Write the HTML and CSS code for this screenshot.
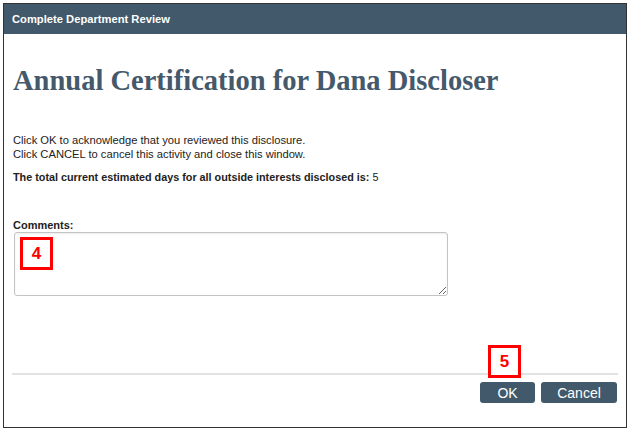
FILE: index.html
```html
<!DOCTYPE html>
<html lang="en">
<head>
    <meta charset="UTF-8">
    <meta name="viewport" content="width=device-width, initial-scale=1.0">
    <title>Complete Department Review</title>
    <link rel="stylesheet" href="styles.css">
</head>
<body>
    <div class="dialog">
        <div class="dialog-header">Complete Department Review</div>

        <div class="dialog-body">
            <h1>Annual Certification for Dana Discloser</h1>

            <p class="instructions">
                Click OK to acknowledge that you reviewed this disclosure.<br>
                Click CANCEL to cancel this activity and close this window.
            </p>

            <p class="total">The total current estimated days for all outside interests disclosed is: <span class="days">5</span></p>

            <div class="comments">
                <label for="comments">Comments:</label>
                <div class="field">
                    <textarea id="comments"></textarea>
                    <span class="step step-comments">4</span>
                </div>
            </div>
        </div>

        <div class="dialog-footer">
            <div class="buttons">
                <div class="btn-wrap">
                    <button class="btn btn-ok">OK</button>
                    <span class="step step-ok">5</span>
                </div>
                <button class="btn btn-cancel">Cancel</button>
            </div>
        </div>
    </div>
</body>
</html>
```

FILE: styles.css
```css
body {
    margin: 0;
    padding: 3px;
    font-family: Arial, "Liberation Sans", sans-serif;
    font-size: 11.2px;
    color: #222;
    background-color: white;
}
.dialog {
    width: 622px;
    height: 423px;
    border: 1px solid #333;
    display: flex;
    flex-direction: column;
}
.dialog-header {
    height: 30px;
    line-height: 30px;
    padding-left: 8px;
    background-color: #41596a;
    color: white;
    font-weight: bold;
    font-size: 11.2px;
}
.dialog-body {
    flex: 1;
    padding: 0 9px;
}
h1 {
    font-family: "Times New Roman", "Liberation Serif", serif;
    font-size: 28.5px;
    font-weight: bold;
    color: #44596b;
    margin: 29px 0 0;
    line-height: 36px;
}
.instructions {
    margin: 34px 0 0;
    line-height: 14px;
}
.total {
    margin: 9px 0 0;
    line-height: 14px;
    font-weight: bold;
    font-size: 10.8px;
}
.days {
    font-weight: normal;
}
.comments {
    margin-top: 34px;
}
.comments label {
    display: block;
    font-weight: bold;
    line-height: 14px;
    font-size: 11px;
}
.field {
    position: relative;
    margin: 0 0 0 1px;
    width: 434px;
}
textarea {
    display: block;
    width: 434px;
    height: 64px;
    box-sizing: border-box;
    border: 1px solid #c4c4c4;
    border-radius: 3px;
    box-shadow: inset 0 1px 2px rgba(0,0,0,0.08);
    font-family: Arial, "Liberation Sans", sans-serif;
    font-size: 12px;
}
.step {
    position: absolute;
    width: 27px;
    height: 27px;
    border: 3px solid #f00;
    background-color: white;
    color: #f00;
    font-weight: bold;
    font-size: 17px;
    line-height: 27px;
    text-align: center;
}
.step-comments {
    left: 6px;
    top: 5px;
}
.dialog-footer {
    margin: 0 8px;
    padding: 7px 1px 24px 0;
    border-top: 2px solid #e2e2e2;
}
.buttons {
    display: flex;
    justify-content: flex-end;
    gap: 6px;
}
.btn-wrap {
    position: relative;
}
.btn {
    height: 21px;
    padding: 0;
    border: none;
    border-radius: 3px;
    background-color: #41596a;
    color: white;
    font-family: Arial, "Liberation Sans", sans-serif;
    font-size: 14px;
    cursor: pointer;
}
.btn-ok {
    width: 55px;
}
.btn-cancel {
    width: 76px;
}
.btn:hover {
    background-color: #34495a;
}
.step-ok {
    left: 8px;
    top: -37px;
}
```
